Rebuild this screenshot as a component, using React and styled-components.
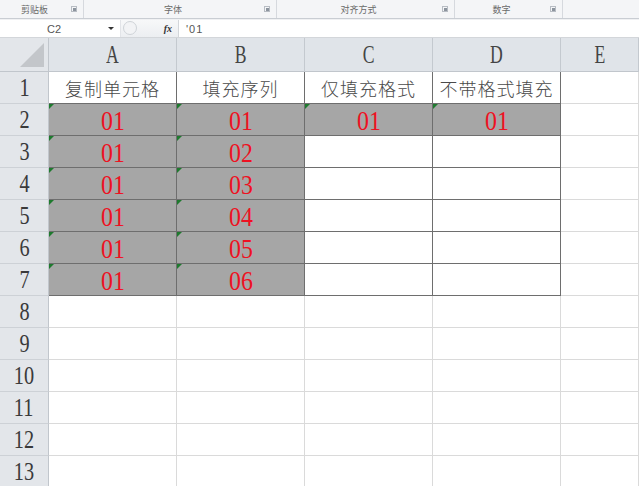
import React from 'react';
import styled, { createGlobalStyle } from 'styled-components';

const GlobalStyle = createGlobalStyle`
  html, body { margin: 0; padding: 0; background: #fff; overflow: hidden; }
  body { font-family: "Noto Sans CJK SC", "Noto Sans", sans-serif; }
`;

const GROUPS = [
  { label: "剪贴板", width: 84 },
  { label: "字体", width: 193 },
  { label: "对齐方式", width: 178 },
  { label: "数字", width: 108 },
];

const COLS = ["A", "B", "C", "D", "E"];

// row 1 headers, then rows 2..7 values for A..D
const HEADERS = ["复制单元格", "填充序列", "仅填充格式", "不带格式填充"];
const DATA = [
  ["01", "01", "01", "01"],
  ["01", "02", "", ""],
  ["01", "03", "", ""],
  ["01", "04", "", ""],
  ["01", "05", "", ""],
  ["01", "06", "", ""],
];

const Page = styled.div`
  width: 639px;
  height: 486px;
  overflow: hidden;
  display: flex;
  flex-direction: column;
  background: #f0f1f3;
`;

const Ribbon = styled.div`
  display: flex;
  height: 18px;
  background: #f4f5f7;
  border-bottom: 1px solid #c9cdd3;
  flex-shrink: 0;
`;

const Group = styled.div`
  position: relative;
  width: ${p => p.$w}px;
  flex-shrink: 0;
  border-right: 1px solid #d6d9de;
  display: flex;
  align-items: center;
  justify-content: center;
  font-size: 9px;
  color: #6a6a6a;
  padding-right: 14px;
  box-sizing: border-box;
`;

const Launcher = styled.span`
  position: absolute;
  right: 6px;
  top: 6px;
  width: 6px;
  height: 6px;
  border: 1px solid #b7bcc3;
  box-sizing: border-box;
  &::after {
    content: "";
    position: absolute;
    right: 0;
    bottom: 0;
    width: 3px;
    height: 3px;
    background: #8c949e;
  }
`;

const FormulaBar = styled.div`
  display: flex;
  height: 17px;
  margin-top: 1px;
  background: #fff;
  border-bottom: 1px solid #d3d6da;
  flex-shrink: 0;
  font-family: "Liberation Sans", "Noto Sans CJK SC", sans-serif;
  font-size: 10px;
  color: #555;
`;

const NameBox = styled.div`
  width: 120px;
  display: flex;
  align-items: center;
  position: relative;
  padding-left: 47px;
  box-sizing: border-box;
  font-size: 11px;
`;

const Caret = styled.span`
  position: absolute;
  right: 6px;
  top: 7px;
  border-left: 3px solid transparent;
  border-right: 3px solid transparent;
  border-top: 3px solid #333;
`;

const Tools = styled.div`
  width: 58px;
  background: linear-gradient(#f7f8f9, #eceef1);
  border-left: 1px solid #e2e4e8;
  position: relative;
  display: flex;
  align-items: center;
  justify-content: flex-end;
  padding-right: 6px;
  box-sizing: border-box;
  font-family: "Liberation Serif", serif;
  font-style: italic;
  font-weight: bold;
  font-size: 10px;
  color: #333;
`;

const Knob = styled.span`
  position: absolute;
  left: 2px;
  top: 1px;
  width: 14px;
  height: 14px;
  border-radius: 50%;
  border: 1px solid #cfd3d8;
  background: #f2f3f5;
  box-sizing: border-box;
`;

const FormulaText = styled.div`
  flex: 1;
  border-left: 1px solid #d3d6da;
  display: flex;
  align-items: center;
  padding-left: 7px;
  letter-spacing: 1px;
  font-size: 11px;
`;

const Sheet = styled.div`
  flex: 1;
  display: grid;
  grid-template-columns: 49px repeat(4, 128px) 1fr;
  grid-template-rows: 34px;
  grid-auto-rows: 32px;
  background: #fff;
  font-family: "Liberation Serif", serif;
`;

const Corner = styled.div`
  background: #e3e6ea;
  border-right: 1px solid #c1c6cc;
  border-bottom: 1px solid #c1c6cc;
  position: relative;
  &::after {
    content: "";
    position: absolute;
    right: 4px;
    bottom: 4px;
    border-left: 24px solid transparent;
    border-bottom: 24px solid #c3c6ca;
  }
`;

const ColHead = styled.div`
  background: #e0e4e9;
  border-right: 1px solid #c4c9cf;
  border-bottom: 1px solid #c1c6cc;
  display: flex;
  align-items: center;
  justify-content: center;
  font-size: 26px;
  color: #444;
  span { display: inline-block; transform: scaleX(0.68); }
`;

const RowHead = styled.div`
  background: #e3e6ea;
  border-right: 1px solid #c1c6cc;
  border-bottom: 1px solid #cdd1d6;
  display: flex;
  align-items: center;
  justify-content: center;
  font-size: 26px;
  color: #3a3a3a;
  span { display: inline-block; transform: scaleX(0.78); }
`;

const Cell = styled.div`
  position: relative;
  background: ${p => (p.$fill ? '#a6a6a6' : '#fff')};
  border-right: 1px solid ${p => (p.$framed ? '#6e6e6e' : '#dadada')};
  border-bottom: 1px solid ${p => (p.$framed ? '#6e6e6e' : '#dadada')};
  display: flex;
  align-items: center;
  justify-content: center;
  overflow: hidden;
`;

const Label = styled.span`
  font-family: "Noto Sans CJK SC", sans-serif;
  font-size: 18px;
  font-weight: 300;
  color: #4a4a4a;
  letter-spacing: 1px;
`;

const Value = styled.span`
  display: inline-block;
  font-size: 28px;
  color: #ee1122;
  transform: scaleX(0.85);
  margin-top: 2px;
`;

const Flag = styled.span`
  position: absolute;
  left: 0;
  top: 0;
  border-top: 5px solid #1e7a2e;
  border-right: 5px solid transparent;
`;

const App = () => {
  const rows = [];
  for (let r = 1; r <= 13; r++) {
    const cells = [<RowHead key={`h${r}`}><span>{r}</span></RowHead>];
    COLS.forEach((c, ci) => {
      const framed = ci < 4 && r <= 7;
      let content = null;
      let fill = false;
      let flag = false;
      if (r === 1 && ci < 4) {
        content = <Label>{HEADERS[ci]}</Label>;
      } else if (r >= 2 && r <= 7 && ci < 4) {
        const v = DATA[r - 2][ci];
        fill = ci < 2 || r === 2;
        if (v) {
          content = <Value>{v}</Value>;
          flag = true;
        }
      }
      cells.push(
        <Cell key={`${c}${r}`} $framed={framed} $fill={fill}>
          {flag && <Flag />}
          {content}
        </Cell>
      );
    });
    rows.push(...cells);
  }

  return (
    <Page>
      <GlobalStyle />
      <Ribbon>
        {GROUPS.map(g => (
          <Group key={g.label} $w={g.width}>
            {g.label}
            <Launcher />
          </Group>
        ))}
      </Ribbon>
      <FormulaBar>
        <NameBox>
          C2
          <Caret />
        </NameBox>
        <Tools>
          <Knob />
          fx
        </Tools>
        <FormulaText>'01</FormulaText>
      </FormulaBar>
      <Sheet>
        <Corner />
        {COLS.map(c => (
          <ColHead key={c}><span>{c}</span></ColHead>
        ))}
        {rows}
      </Sheet>
    </Page>
  );
};

export default App;
